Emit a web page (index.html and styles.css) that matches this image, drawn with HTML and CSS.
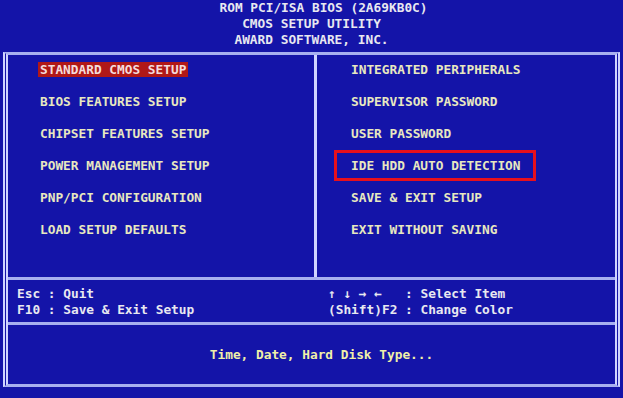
FILE: index.html
```html
<!DOCTYPE html>
<html lang="en">
<head>
  <meta charset="UTF-8" />
  <title>CMOS Setup Utility</title>
  <link rel="stylesheet" href="styles.css">
</head>
<body>
  <div class="header">
    <div class="title-first">ROM PCI/ISA BIOS (2A69KB0C)</div>
    <div>CMOS SETUP UTILITY</div>
    <div>AWARD SOFTWARE, INC.</div>
  </div>

  <div class="frame">
    <div class="menu">
      <div class="menu-col left">
        <div class="item"><span class="selected">STANDARD CMOS SETUP</span></div>
        <div class="item">BIOS FEATURES SETUP</div>
        <div class="item">CHIPSET FEATURES SETUP</div>
        <div class="item">POWER MANAGEMENT SETUP</div>
        <div class="item">PNP/PCI CONFIGURATION</div>
        <div class="item">LOAD SETUP DEFAULTS</div>
      </div>
      <div class="menu-col right">
        <div class="item">INTEGRATED PERIPHERALS</div>
        <div class="item">SUPERVISOR PASSWORD</div>
        <div class="item">USER PASSWORD</div>
        <div class="item"><span class="marked">IDE HDD AUTO DETECTION</span></div>
        <div class="item">SAVE &amp; EXIT SETUP</div>
        <div class="item">EXIT WITHOUT SAVING</div>
      </div>
    </div>

    <div class="keys">
      <div class="keys-col left">
        <div class="key-line">Esc : Quit</div>
        <div class="key-line">F10 : Save &amp; Exit Setup</div>
      </div>
      <div class="keys-col">
        <div class="key-line">↑ ↓ → ←   : Select Item</div>
        <div class="key-line">(Shift)F2 : Change Color</div>
      </div>
    </div>

    <div class="help">Time, Date, Hard Disk Type...</div>
  </div>
</body>
</html>
```

FILE: styles.css
```css
body {
  margin: 0;
  width: 623px;
  height: 398px;
  overflow: hidden;
  background-color: #1414a8;
  color: #e8e8f0;
  font-family: "DejaVu Sans Mono", "Liberation Mono", monospace;
  font-weight: bold;
  font-size: 12.8px;
  line-height: 16px;
}

.header {
  text-align: center;
  height: 48px;
  margin-bottom: 4px;
}

.title-first {
  padding-left: 24px;
}

.frame {
  margin: 0 3px;
  border-top: 3px solid #a8b0f0;
  border-bottom: 3px solid #a8b0f0;
  border-left: 5px double #d0d4ff;
  border-right: 5px double #d0d4ff;
}

.menu {
  display: grid;
  grid-template-columns: 306px 1fr;
  height: 222px;
}

.menu-col {
  display: flex;
  flex-direction: column;
  gap: 16px;
  padding-top: 7px;
  color: #e8e8c0;
}

.menu-col.left {
  padding-left: 32px;
}

.menu-col.right {
  border-left: 3px solid #d0d4ff;
  padding-left: 34px;
}

.selected {
  background-color: #b01818;
  color: #f4dcdc;
  padding: 0 2px;
  margin-left: -2px;
}

.marked {
  position: relative;
}

.marked::after {
  content: "";
  position: absolute;
  top: -8px;
  bottom: -8px;
  left: -17px;
  right: -15px;
  border: 3px solid #e8101c;
}

.keys {
  display: grid;
  grid-template-columns: 320px 1fr;
  border-top: 3px solid #a8b0f0;
  height: 45px;
  box-sizing: border-box;
  padding-top: 6px;
}

.key-line {
  white-space: pre;
}

.keys-col.left {
  padding-left: 9px;
}

.help {
  border-top: 3px solid #a8b0f0;
  padding: 22px 0 21px 20px;
  text-align: center;
  color: #f0f0a8;
}
```
